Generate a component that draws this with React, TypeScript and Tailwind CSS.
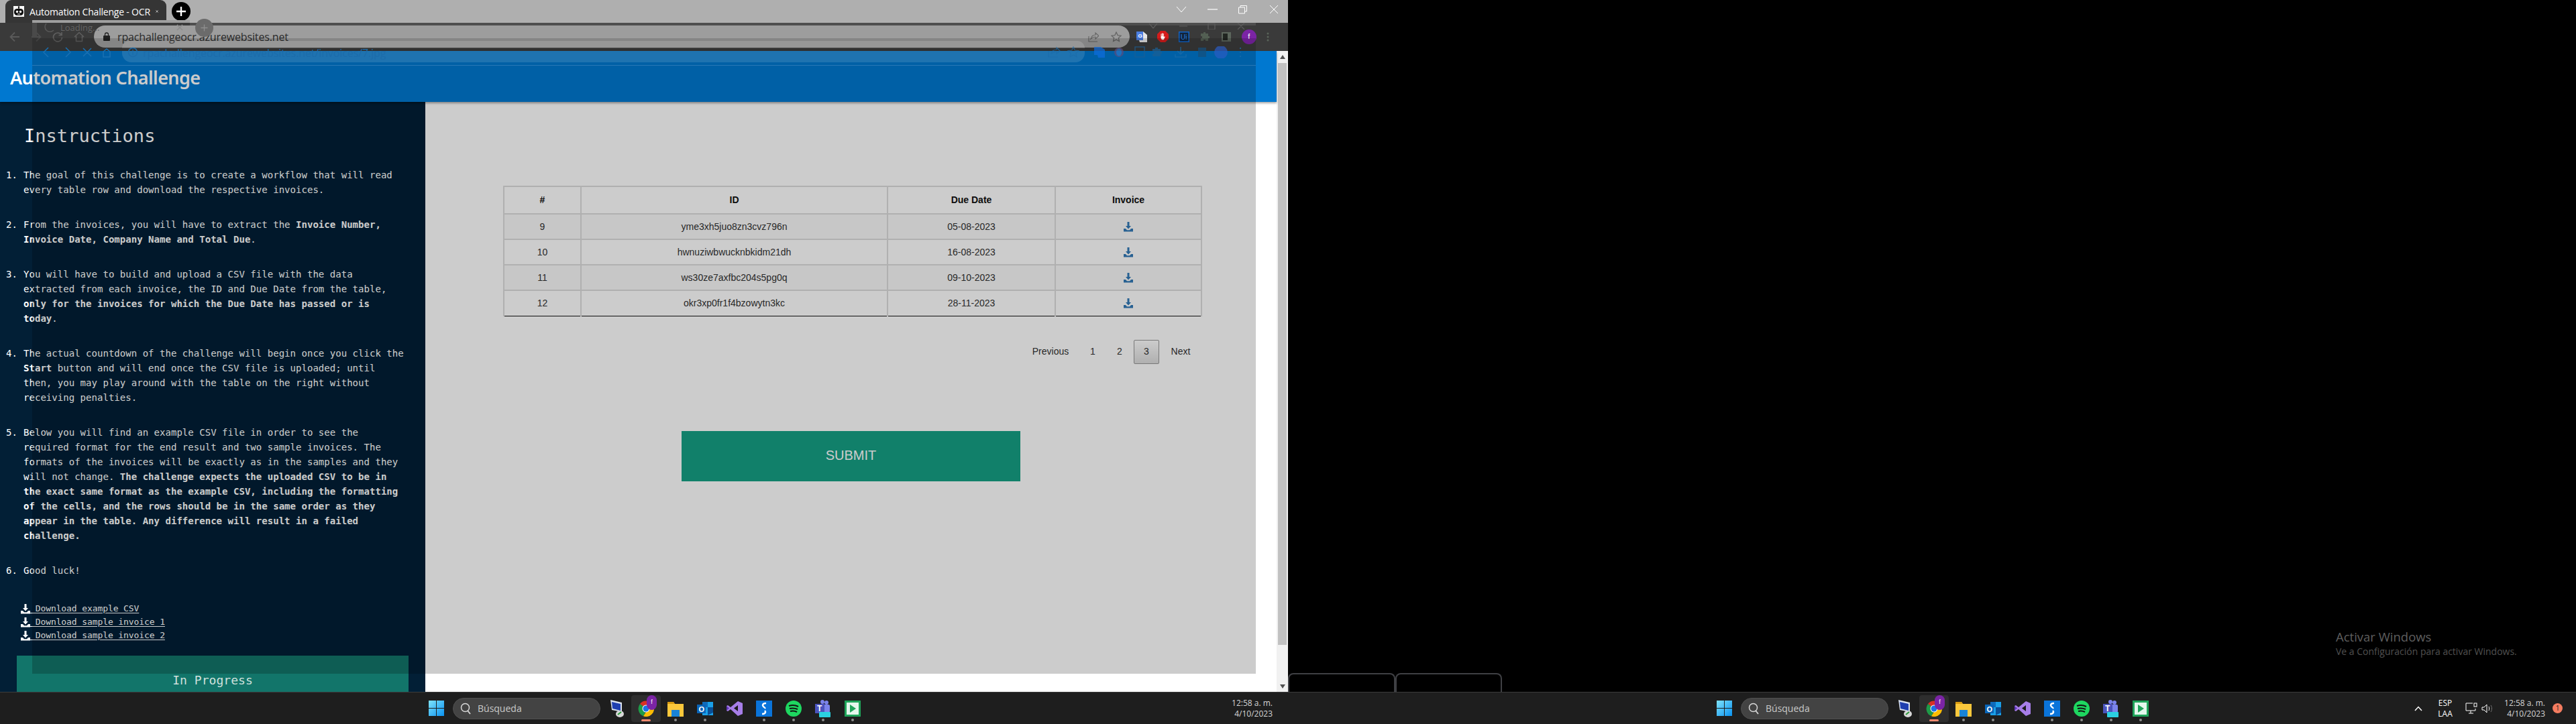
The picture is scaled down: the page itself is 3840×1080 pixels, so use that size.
import React from "react";

const Sans = "font-['Open_Sans','Noto_Sans',sans-serif]";

function Plus({ c = "#fff", s = 18, w = 2.4 }: { c?: string; s?: number; w?: number }) {
  return (
    <svg width={s} height={s} viewBox="0 0 18 18">
      <path d="M9 2v14M2 9h14" stroke={c} strokeWidth={w} />
    </svg>
  );
}

function Dl({ c, s = 14 }: { c: string; s?: number }) {
  return (
    <svg width={s} height={s + 1} viewBox="0 0 14 15" className="shrink-0">
      <path d="M5.5 0h3v6H11L7 10.500 3 6h2.500z" fill={c} />
      <path d="M0 10h3l2 2.200h4L11 10h3v4.500H0z" fill={c} />
    </svg>
  );
}

function Favicon() {
  return (
    <svg width="16" height="16" viewBox="0 0 16 16" className="shrink-0">
      <rect width="16" height="16" fill="#fff" />
      <path d="M8 1v3" stroke="#111" strokeWidth="1.500" />
      <circle cx="8" cy="1.500" r="1.200" fill="#111" />
      <rect x="1" y="4" width="14" height="10" rx="4.500" fill="#111" />
      <circle cx="5.500" cy="8.500" r="1.700" fill="#fff" />
      <circle cx="10.500" cy="8.500" r="1.700" fill="#fff" />
      <path d="M6 12h4" stroke="#fff" />
    </svg>
  );
}

function NavIcons() {
  return (
    <div className="flex items-center w-[140px] shrink-0 pl-[14px] gap-[16px]">
      <svg width="16" height="16" viewBox="0 0 16 16"><path d="M15 8H2M8 1.500 1.500 8 8 14.500" fill="none" stroke="#5a5a5a" strokeWidth="1.800" /></svg>
      <svg width="16" height="16" viewBox="0 0 16 16"><path d="M1 8h13M8 1.500 14.500 8 8 14.500" fill="none" stroke="#4d4d4d" strokeWidth="1.800" /></svg>
      <svg width="16" height="16" viewBox="0 0 16 16"><path d="M13.500 5A6.500 6.500 0 1 0 14.500 9M14 1v4.500H9.500" fill="none" stroke="#5f5f5f" strokeWidth="1.700" /></svg>
      <svg width="16" height="16" viewBox="0 0 16 16"><path d="M1 8 8 1.500 15 8M3.500 7v7.500h9V7" fill="none" stroke="#5f5f5f" strokeWidth="1.500" /></svg>
    </div>
  );
}

function Extensions() {
  return (
    <div className="flex items-center ml-[10px] w-[212px] justify-between pr-[14px]">
      <svg width="16" height="16" viewBox="0 0 16 16">
        <path d="M0 0h10l6 5v11H5z" fill="#e6e6e6" />
        <path d="M0 0h10v13H0z" fill="#4a7de0" />
        <text x="2.500" y="9" fontSize="8" fill="#fff" fontFamily="Liberation Sans" fontWeight="700">G</text>
      </svg>
      <svg width="17" height="17" viewBox="0 0 17 17">
        <path d="M5 0h7l5 5v7l-5 5H5l-5-5V5z" fill="#d41c1c" />
        <path d="M5.500 8V4.500h1V8h.5V3.500h1.200V8h.5V4h1.100v5.500l1-1.200 1 .5-2 4.500H7L5.500 11z" fill="#fff" />
      </svg>
      <svg width="16" height="16" viewBox="0 0 16 16">
        <rect x=".75" y=".75" width="14.500" height="14.500" fill="#12243a" stroke="#1264c8" strokeWidth="1.500" />
        <text x="3" y="11.500" fontSize="10" fill="#2a80e0" fontFamily="Liberation Sans">Ui</text>
      </svg>
      <svg width="16" height="16" viewBox="0 0 16 16"><path d="M6 1h3v2h4v4h2v3h-2v4H9v-2H6v2H2v-4h2V7H2V3h4z" fill="#535f53" /></svg>
      <svg width="16" height="16" viewBox="0 0 16 16"><rect x="1" y="1" width="14" height="14" fill="#5c665c" /><rect x="3" y="3" width="7" height="10" fill="#202420" /></svg>
      <div className="w-[22px] h-[22px] rounded-full bg-[#7b24a5] text-white text-[11px] flex items-center justify-center font-['Liberation_Sans',sans-serif]">f</div>
      <svg width="4" height="14" viewBox="0 0 4 14"><circle cx="2" cy="2" r="1.500" fill="#5a655a" /><circle cx="2" cy="7" r="1.500" fill="#5a655a" /><circle cx="2" cy="12" r="1.500" fill="#5a655a" /></svg>
    </div>
  );
}

function Ghost() {
  return (
    <>
      {/* the translucent second window */}
      <div className="absolute left-[48px] top-[76px] w-[1824px] h-[929px] bg-black/20" />
      <div className="absolute left-[48px] top-[30px] w-[235px] h-[4px] bg-[#9f9f9f]" />
      <div className="absolute left-[283px] top-[34px] w-[1589px] h-[4px] bg-[#4e4e4e]" />
      <div className="absolute left-[48px] top-[57px] w-[1824px] h-[19px] bg-black/15" />
      <div className="absolute left-[182px] top-[61px] w-[1435px] h-[11px] rounded-t-[14px] bg-white/15" />
      <div className="absolute left-[48px] top-[34px] w-[7px] h-[22px] bg-[#4a4a4a]" />
      <div className={`absolute left-[90px] top-[32px] text-[13px] text-[#646464] ${Sans}`}>Loading...</div>
      <svg className="absolute left-[66px] top-[34px]" width="16" height="14" viewBox="0 0 16 14"><path d="M3 1a6.500 6.500 0 0 0 11 10" fill="none" stroke="#585858" strokeWidth="1.500" /></svg>
      <svg className="absolute left-[263px] top-[36px]" width="10" height="10" viewBox="0 0 10 10"><path d="M1 1l8 8M9 1l-8 8" stroke="#8d8d8d" strokeWidth="1.500" /></svg>
      <div className="absolute left-[291px] top-[28px] w-[27px] h-[27px] rounded-full bg-[#6b6b6b] flex items-center justify-center"><Plus c="#8e8e8e" s={13} w={1.800} /></div>
      <div className="absolute left-[182px] top-[76px] w-[1435px] h-[17px] rounded-b-[14px] bg-white/12" />
      <div className="absolute left-[48px] top-[97px] w-[1824px] h-px bg-[#2878b6]" />
      <div className={`absolute left-[213px] top-[67px] text-[16px] text-[#1c6cab] tracking-[-0.1px] ${Sans}`}>rpachallengeocr.azurewebsites.net/invoices/7.jpg</div>
      <svg className="absolute left-[190px] top-[70px]" width="16" height="16" viewBox="0 0 16 16"><circle cx="8" cy="8" r="6.500" fill="none" stroke="#1c6cab" strokeWidth="1.500" /><path d="M8 7v5M8 4v1.500" stroke="#1c6cab" strokeWidth="1.500" /></svg>
      <svg className="absolute left-[60px] top-[70px]" width="108" height="16" viewBox="0 0 108 16" fill="none" stroke="#1a70b2" strokeWidth="1.500">
        <path d="M12 1 5 8l7 7M38 1l7 7-7 7M64 2l12 12M76 2 64 14M94 7l5-4 5 4v8H94z" />
      </svg>
      <svg className="absolute left-[1562px] top-[69px] opacity-70" width="290" height="18" viewBox="0 0 290 18">
        <path d="M1 7v9h14M5 11c1-4 4-6 8-6V2l5 5-5 4V8c-3 0-5 1-8 3z" fill="none" stroke="#1c6cab" strokeWidth="1.200" />
        <path d="M38 1l2.300 5 5.700.6-4.200 3.800 1.200 5.500L38 13l-5 2.900 1.200-5.500L30 6.600 35.700 6z" fill="none" stroke="#1c6cab" strokeWidth="1.200" />
        <path d="M69 1h10l6 4v12H75l-1-4h-5z" fill="#0f6ee0" />
        <circle cx="106" cy="9" r="7" fill="#5c4c80" />
        <ellipse cx="106" cy="9" rx="4" ry="5.500" fill="#2b78c8" />
        <rect x="130" y="1" width="14" height="15" fill="none" stroke="#1c5f94" strokeWidth="1.500" />
        <path d="M160 2h4v2h4v4h2v3h-2v4h-12v-4h2V8h-2V4h4z" fill="#1c5f94" />
        <path d="M198 1v10m-5-4 5 5 5-5M190 12v4h16v-4" fill="none" stroke="#1c6cab" strokeWidth="1.500" />
        <rect x="224" y="2" width="12" height="14" fill="#164f7c" />
        <circle cx="258" cy="9" r="10" fill="#2a5cc4" />
        <path d="M287 2v2M287 8v2M287 14v2" stroke="#1c6cab" strokeWidth="2" />
      </svg>
      <svg className="absolute left-[1712px] top-[34px]" width="150" height="10" viewBox="0 0 150 10" fill="none" stroke="#5c5c5c" strokeWidth="1.200">
        <path d="M1 1l6 7 6-7M46 5h12M89 1h10v9H89zM133 0l10 10M143 0l-10 10" />
      </svg>
    </>
  );
}

function Chrome() {
  return (
    <>
      <div className="h-[34px] bg-[#afafaf] flex items-start pl-[8px]">
        <div className={`w-[240px] h-[34px] bg-[#353535] rounded-t-[9px] flex items-center px-[12px] gap-[8px] text-white text-[14px] ${Sans}`}>
          <Favicon />
          <span className="whitespace-nowrap flex-1 tracking-[-0.2px]">Automation Challenge - OCR</span>
          <svg width="10" height="10" viewBox="0 0 10 10"><path d="M1 1l8 8M9 1l-8 8" stroke="#fff" strokeWidth="1.600" /></svg>
        </div>
        <div className="ml-[8px] mt-[3px] w-[28px] h-[28px] rounded-full bg-black flex items-center justify-center"><Plus /></div>
        <div className="ml-auto flex items-center gap-[30px] pr-[13px] h-[28px]">
          <svg width="16" height="10" viewBox="0 0 16 10"><path d="M1 1l7 8 7-8" fill="none" stroke="#fff" /></svg>
          <svg width="16" height="10" viewBox="0 0 16 10"><path d="M1 5h15" stroke="#fff" strokeWidth="1.200" /></svg>
          <svg width="16" height="14" viewBox="0 0 16 14"><path d="M1.500 4h9v9h-9zM4 4V1.500h9.500V10H10.500" fill="none" stroke="#fff" /></svg>
          <svg width="16" height="14" viewBox="0 0 16 14"><path d="M2 1l12 12M14 1 2 13" stroke="#fff" /></svg>
        </div>
      </div>
      <div className="h-[42px] bg-[#3a3a3a] flex items-start pt-[4px]">
        <div className="h-[33px] flex items-center"><NavIcons /></div>
        <div className="w-[1544px] h-[33px] rounded-[17px] bg-[#9d9d9d] flex items-center pl-[14px] pr-[12px] gap-[8px]">
          <svg width="10" height="13" viewBox="0 0 10 13"><path d="M2.500 5V3.500a2.500 2.500 0 0 1 5 0V5" fill="none" stroke="#202020" strokeWidth="1.300" /><rect y="5" width="10" height="8" rx="1" fill="#202020" /></svg>
          <span className={`text-[16px] text-[#2b2b2b] ${Sans} tracking-[-0.15px] ml-[3px]`}>rpachallengeocr.azurewebsites.net</span>
          <div className="ml-auto flex items-center gap-[18px]">
            <svg width="16" height="16" viewBox="0 0 16 16"><path d="M1 7v8h13M4 11c1-4 4-6 7-6V2l5 4.500L11 11V8c-3 0-5 1-7 3z" fill="none" stroke="#666" strokeWidth="1.200" /></svg>
            <svg width="16" height="16" viewBox="0 0 16 16"><path d="M8 1l2.100 4.600 5 .6-3.700 3.400 1 5L8 12.100 3.600 14.600l1-5L.9 6.200l5-.6z" fill="none" stroke="#666" strokeWidth="1.300" /></svg>
          </div>
        </div>
        <div className="h-[33px] flex items-center flex-1"><Extensions /></div>
      </div>
    </>
  );
}

const item = "pl-[35px] relative mb-[30px]";
const num = "absolute left-[9px]";

function Sidebar() {
  const links = ["Download example CSV", "Download sample invoice 1", "Download sample invoice 2"];
  return (
    <div className="w-[634px] bg-[#021f36] overflow-hidden text-[#fff] font-['DejaVu_Sans_Mono','Liberation_Mono',monospace] text-[14px] leading-[22px] tracking-[0.03px]">
      <h2 className="text-[27px] leading-[40px] mt-[31px] ml-[36px]">Instructions</h2>
      <div className="pt-[27px] pr-[10px]">
        <div className={item}><span className={num}>1.</span>The goal of this challenge is to create a workflow that will read<br />every table row and download the respective invoices.</div>
        <div className={item}><span className={num}>2.</span>From the invoices, you will have to extract the <b>Invoice Number,</b><br /><b>Invoice Date, Company Name and Total Due</b>.</div>
        <div className={item}><span className={num}>3.</span>You will have to build and upload a CSV file with the data<br />extracted from each invoice, the ID and Due Date from the table,<br /><b>only for the invoices for which the Due Date has passed or is</b><br /><b>today</b>.</div>
        <div className={item}><span className={num}>4.</span>The actual countdown of the challenge will begin once you click the<br /><b>Start</b> button and will end once the CSV file is uploaded; until<br />then, you may play around with the table on the right without<br />receiving penalties.</div>
        <div className={item}><span className={num}>5.</span>Below you will find an example CSV file in order to see the<br />required format for the end result and two sample invoices. The<br />formats of the invoices will be exactly as in the samples and they<br />will not change. <b>The challenge expects the uploaded CSV to be in</b><br /><b>the exact same format as the example CSV, including the formatting</b><br /><b>of the cells, and the rows should be in the same order as they</b><br /><b>appear in the table. Any difference will result in a failed</b><br /><b>challenge.</b></div>
        <div className={item}><span className={num}>6.</span>Good luck!</div>
      </div>
      <div className="ml-[31px] mt-[36px] flex flex-col text-[13px] leading-[20px] tracking-[-0.1px]">
        {links.map((l) => (
          <div key={l} className="flex items-center h-[20px]">
            <Dl c="#fff" />
            <span className="underline whitespace-pre underline-offset-2">{" " + l}</span>
          </div>
        ))}
      </div>
      <div className="ml-[25px] w-[584px] h-[80px] mt-[20px] bg-[#12756a] text-[18px] text-center pt-[25px] leading-[24px] text-[#cfe0dc]">In Progress</div>
    </div>
  );
}

const rows = [
  ["9", "yme3xh5juo8zn3cvz796n", "05-08-2023"],
  ["10", "hwnuziwbwucknbkidm21dh", "16-08-2023"],
  ["11", "ws30ze7axfbc204s5pg0q", "09-10-2023"],
  ["12", "okr3xp0fr1f4bzowytn3kc", "28-11-2023"],
];

function Main() {
  return (
    <div className="flex-1 bg-white flex flex-col font-['Liberation_Sans',sans-serif] text-[14px] text-[#333]">
      <div className="h-[853px] pt-[125px] pl-[116px]">
        <div className="w-[1040px]">
          <table className="w-[1040px] table-fixed border-collapse text-center">
            <colgroup>
              <col className="w-[115px]" />
              <col className="w-[457px]" />
              <col className="w-[250px]" />
              <col className="w-[218px]" />
            </colgroup>
            <thead>
              <tr className="h-[41px] text-[#111]">
                {["#", "ID", "Due Date", "Invoice"].map((h) => (
                  <th key={h} className="border-2 border-[#ddd] border-b-1 border-b-[#111] font-bold">{h}</th>
                ))}
              </tr>
            </thead>
            <tbody>
              {rows.map((r, i) => (
                <tr key={r[0]} className={`h-[38px] ${i % 2 === 0 ? "bg-[#f9f9f9]" : "bg-white"}`}>
                  {r.map((c) => (
                    <td key={c} className={`border-2 border-[#ddd] ${i === 3 ? "border-b-1 border-b-[#111]" : ""}`}>{c}</td>
                  ))}
                  <td className={`border-2 border-[#ddd] ${i === 3 ? "border-b-1 border-b-[#111]" : ""}`}>
                    <div className="flex justify-center"><Dl c="#337ab7" /></div>
                  </td>
                </tr>
              ))}
            </tbody>
          </table>
          <div className="mt-[35px] flex justify-end text-[14px] h-[36px] items-center gap-[2px]">
            <span className="w-[84px] text-center">Previous</span>
            <span className="w-[38px] text-center">1</span>
            <span className="w-[38px] text-center">2</span>
            <span className="w-[38px] h-[36px] flex items-center justify-center border border-[#979797] rounded-[2px] bg-gradient-to-b from-white to-[#dcdcdc]">3</span>
            <span className="w-[60px] text-center">Next</span>
          </div>
          <button className="block mt-[100px] ml-[266px] w-[505px] h-[75px] pb-[3px] bg-[#16a085] text-white text-[20px]">SUBMIT</button>
        </div>
      </div>
    </div>
  );
}

function Scrollbar() {
  return (
    <div className="w-[17px] bg-[#f1f1f1] flex flex-col items-center">
      <div className="h-[17px] flex items-center justify-center">
        <div className="border-x-[4px] border-x-transparent border-b-[6px] border-b-[#505050]" />
      </div>
      <div className="w-[13px] h-[868px] bg-[#c1c1c1] mt-[1px]" />
      <div className="mt-auto h-[17px] flex items-center justify-center">
        <div className="border-x-[4px] border-x-transparent border-t-[6px] border-t-[#505050]" />
      </div>
    </div>
  );
}

function WinLogo() {
  return (
    <svg width="23" height="23" viewBox="0 0 23 23" className="shrink-0">
      <defs>
        <linearGradient id="wl" x1="0" y1="0" x2="1" y2="1">
          <stop offset="0" stopColor="#7fe3fb" />
          <stop offset="1" stopColor="#0a92f0" />
        </linearGradient>
      </defs>
      <path d="M0 0h11v11H0zM12 0h11v11H12zM0 12h11v11H0zM12 12h11v11H12z" fill="url(#wl)" />
    </svg>
  );
}

function Tb({ children, dot, active }: { children: React.ReactNode; dot?: boolean; active?: boolean }) {
  return (
    <div className={`relative w-[44px] h-[40px] flex items-center justify-center rounded-[4px] ${active ? "bg-[#2e2e2e]" : ""}`}>
      {children}
      {dot && <div className="absolute bottom-[1px] left-[20px] w-[4px] h-[4px] rounded-full bg-[#8f8f8f]" />}
      {active && <div className="absolute bottom-[1px] left-[15px] w-[14px] h-[3px] rounded-[2px] bg-[#f98a70]" />}
    </div>
  );
}

function TaskIcons() {
  return (
    <div className="flex items-center ml-[2px]">
      <Tb>
        <svg width="24" height="26" viewBox="0 0 24 26"><path d="M3 0l17 4v14L5 15z" fill="#dbe3f0" /><path d="M5 3l13 3v10L6 13z" fill="#1f3fb0" /><ellipse cx="17" cy="21" rx="6" ry="5" fill="#d8d8d8" /><path d="M14 22l5-4" stroke="#2b9a3a" strokeWidth="2" /></svg>
      </Tb>
      <Tb active>
        <div className="relative">
          <svg width="24" height="24" viewBox="0 0 24 24">
            <path d="M12 12 3 5A12 12 0 0 1 23.500 8.500H12z" fill="#d93025" />
            <path d="M12 12 3 5a12 12 0 0 0 5 18.300L12 16z" fill="#1e9a48" />
            <path d="M12 8.500h11.500A12 12 0 0 1 8 23.300L14 14z" fill="#fbbc04" />
            <circle cx="12" cy="12" r="5.500" fill="#fff" />
            <circle cx="12" cy="12" r="4.500" fill="#1a73e8" />
          </svg>
          <div className="absolute -top-[8px] left-[13px] w-[15px] h-[22px] rounded-full bg-[#7b24a5] text-white text-[9px] flex items-center justify-center font-['Liberation_Sans',sans-serif]">f</div>
        </div>
      </Tb>
      <Tb dot>
        <svg width="24" height="24" viewBox="0 0 24 24"><path d="M0 2h9l2 3h13v19H0z" fill="#fbc83c" /><path d="M0 2h9l2 3H0z" fill="#d79a10" /><rect x="6" y="14" width="12" height="10" fill="#1883d7" /></svg>
      </Tb>
      <Tb dot>
        <svg width="24" height="24" viewBox="0 0 24 24"><path d="M8 2h16v20H8z" fill="#1aa0e8" /><path d="M8 2h8v8H8z" fill="#0f6cbd" /><path d="M16 10h8v8l-8 4z" fill="#0a4f96" /><rect y="6" width="13" height="13" fill="#0a64b8" /><text x="2.500" y="16.500" fontSize="11" fontWeight="700" fill="#fff" fontFamily="Liberation Sans">O</text></svg>
      </Tb>
      <Tb>
        <svg width="24" height="24" viewBox="0 0 24 24"><path d="M17 1l7 3v16l-7 3L6 13 2 16 0 15V8l2-1 4 3z" fill="#a77ee8" /><path d="M17 7v9l-6-4.500z" fill="#1c1c1c" /><path d="M0 8v7l4-3.500z" fill="#5f36b5" /></svg>
      </Tb>
      <Tb dot>
        <svg width="24" height="24" viewBox="0 0 24 24"><rect width="24" height="24" fill="#0a74da" /><path d="M15 4c-5 0-6 3-4 5s3 2 2 3M9 20c5 0 6-3 4-5" fill="none" stroke="#fff" strokeWidth="2.400" /></svg>
      </Tb>
      <Tb dot>
        <svg width="24" height="24" viewBox="0 0 24 24"><circle cx="12" cy="12" r="12" fill="#1ed760" /><path d="M5 8c5-1.500 10-1 14 1M6 12c4-1 8-.7 12 1M7 16c3-.8 7-.5 10 1" fill="none" stroke="#111" strokeWidth="2" /></svg>
      </Tb>
      <Tb dot>
        <svg width="26" height="26" viewBox="0 0 26 26"><circle cx="18" cy="4" r="3" fill="#7b83eb" /><circle cx="12" cy="3" r="3" fill="#7b83eb" /><rect x="13" y="7" width="10" height="12" rx="2" fill="#7b83eb" /><rect x="1" y="6" width="14" height="14" fill="#4b53bc" /><text x="4" y="17" fontSize="12" fontWeight="700" fill="#fff" fontFamily="Liberation Sans">T</text><rect x="7" y="18" width="17" height="8" rx="1" fill="#2bd0e0" /></svg>
      </Tb>
      <Tb dot>
        <svg width="24" height="24" viewBox="0 0 24 24"><rect width="24" height="24" fill="#1fa45a" /><rect x="3" y="3" width="18" height="18" fill="#e4f7ec" /><path d="M8 6l9 6-9 6z" fill="#1fa45a" /></svg>
      </Tb>
    </div>
  );
}

function Search() {
  return (
    <div className={`ml-[13px] w-[220px] h-[32px] rounded-[16px] bg-[#434343] border border-[#505050] flex items-center pl-[10px] gap-[10px] text-[14px] text-[#c9c9c9] ${Sans}`}>
      <svg width="16" height="18" viewBox="0 0 16 18"><circle cx="7.500" cy="7.500" r="6" fill="none" stroke="#d8d8d8" strokeWidth="1.500" /><path d="M11 12l4 5" stroke="#d8d8d8" strokeWidth="1.800" /></svg>
      <span>Búsqueda</span>
    </div>
  );
}

function Clock() {
  return (
    <div className={`text-right text-[12px] leading-[16px] text-[#d6d6d6] ${Sans}`}>
      <div>12:58 a. m.</div>
      <div>4/10/2023</div>
    </div>
  );
}

function Taskbar({ tray }: { tray?: boolean }) {
  return (
    <div className="w-[1920px] h-full flex items-center pl-[639px]">
      <WinLogo />
      <Search />
      <TaskIcons />
      {tray ? (
        <div className={`ml-auto flex items-center pr-[20px] text-white text-[12px] ${Sans}`}>
          <svg width="12" height="8" viewBox="0 0 12 8"><path d="M1 7l5-5.500L11 7" fill="none" stroke="#fff" strokeWidth="1.500" /></svg>
          <div className="ml-[20px] text-center leading-[16px] w-[28px]"><div>ESP</div><div>LAA</div></div>
          <svg className="ml-[16px]" width="18" height="18" viewBox="0 0 18 18"><path d="M11 1H1v11h14V9M5 16h7M8 12v4" fill="none" stroke="#fff" /><rect x="13" y="1" width="4" height="5" fill="none" stroke="#fff" /></svg>
          <svg className="ml-[6px]" width="18" height="14" viewBox="0 0 18 14"><path d="M1 5h3l4-4v12L4 9H1z" fill="none" stroke="#fff" /><path d="M11 4c1 2 1 4 0 6" fill="none" stroke="#fff" /><path d="M14 2c2 3 2 7 0 10" fill="none" stroke="#777" /></svg>
          <div className="ml-[16px]"><Clock /></div>
          <div className="ml-[11px] w-[15px] h-[15px] rounded-full bg-[#f47c60] text-[#222] text-[10px] flex items-center justify-center">1</div>
        </div>
      ) : (
        <div className="ml-auto pr-[23px]"><Clock /></div>
      )}
    </div>
  );
}

export default function App() {
  return (
    <div className="relative w-[3840px] h-[1080px] bg-black overflow-hidden flex flex-col">
      <div className="h-[1032px] flex">
        <div className="relative w-[1920px] flex flex-col">
          <Chrome />
          <div className="flex-1 flex min-h-0">
            <div className="flex-1 flex flex-col min-w-0">
              <header className="relative h-[76px] bg-[#0078d0] flex items-center pl-[15px] pt-[4px] text-white text-[27px] tracking-[-0.6px] font-semibold font-['Noto_Sans','Open_Sans',sans-serif] shadow-[0_2px_3px_rgba(0,0,0,0.35)]">Automation Challenge</header>
              <div className="flex-1 flex min-h-0">
                <Sidebar />
                <Main />
              </div>
            </div>
            <Scrollbar />
          </div>
          <Ghost />
        </div>
        <div className="flex-1 relative flex items-end">
          <div className="w-[160px] h-[28px] border-2 border-b-0 border-[#3f4044] rounded-t-[8px]" />
          <div className="w-[159px] h-[28px] border-2 border-b-0 border-[#3f4044] rounded-t-[8px]" />
          <div className={`absolute left-[1562px] top-[938px] text-[#5e5e5e] ${Sans}`}>
            <div className="text-[18.500px] leading-[24px]">Activar Windows</div>
            <div className="text-[14px] leading-[20px] text-[#505050]">Ve a Configuración para activar Windows.</div>
          </div>
        </div>
      </div>
      <div className="h-[48px] bg-[#1e1e1e] border-t border-[#3c3c3c] flex">
        <Taskbar />
        <Taskbar tray />
      </div>
    </div>
  );
}
